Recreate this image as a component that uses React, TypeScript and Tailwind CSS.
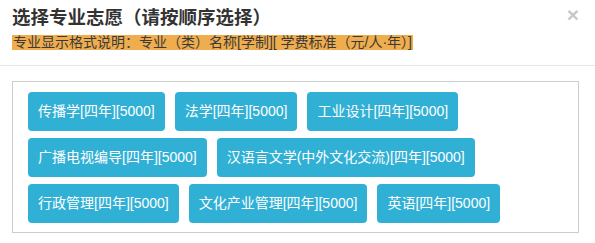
const majors = [
  "传播学[四年][5000]",
  "法学[四年][5000]",
  "工业设计[四年][5000]",
  "广播电视编导[四年][5000]",
  "汉语言文学(中外文化交流)[四年][5000]",
  "行政管理[四年][5000]",
  "文化产业管理[四年][5000]",
  "英语[四年][5000]",
];

export default function App() {
  return (
    <div
      className="h-[243px] w-[595px] overflow-hidden bg-white text-[#333]"
      style={{ fontFamily: '"Liberation Sans", "Noto Sans CJK SC", sans-serif' }}
    >
      <div className="relative h-[66px] border-b border-[#e5e5e5] px-[12px] pt-[6px]">
        <h4 className="text-[18.5px] font-bold leading-[24px]">
          选择专业志愿（请按顺序选择）
        </h4>
        <div className="mt-[2px] inline-block bg-[#f0ad4e] px-px text-[14px] leading-[15px] text-[#3a3a3a]">
          专业显示格式说明：专业（类）名称[学制][ 学费标准（元/人·年）]
        </div>
        <button className="absolute right-[16px] top-[5px] text-[21px] font-bold leading-[20px] text-[#c8c8c8]">
          ×
        </button>
      </div>
      <div className="px-[12px] pt-[15px]">
        <div className="flex h-[152px] w-[567px] flex-wrap content-start gap-x-[10px] gap-y-[7px] border border-[#ccc] pl-[15px] pr-[10px] pt-[10px]">
          {majors.map((m) => (
            <button
              key={m}
              className="flex h-[39px] items-center rounded-[4px] bg-[#31b0d5] px-[10px] text-[14px] text-white"
            >
              {m}
            </button>
          ))}
        </div>
      </div>
    </div>
  );
}
